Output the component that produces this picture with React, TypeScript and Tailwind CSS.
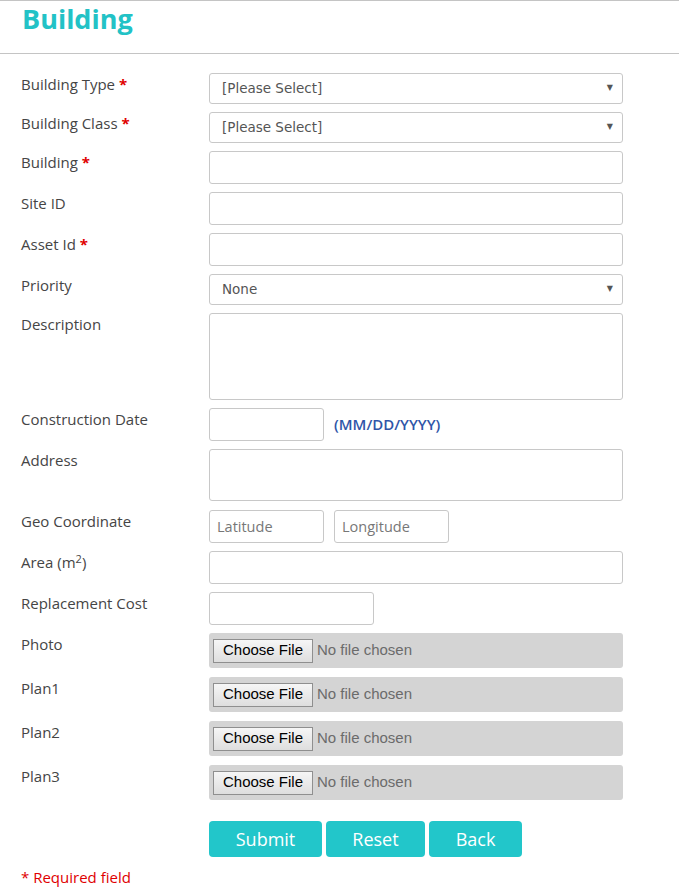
import React from "react";

const font = { fontFamily: '"Open Sans", Arial, sans-serif' };

function Req() {
  return <span className="ml-1 font-bold text-[#e00000]">*</span>;
}

function Row({ label, children, gap = "mb-2" }: { label: React.ReactNode; children: React.ReactNode; gap?: string }) {
  return (
    <div className={`flex ${gap}`}>
      <div className="w-[209px] shrink-0 pl-[21px] text-[15px] leading-[22px] text-[#454545]">{label}</div>
      <div className="flex items-center">{children}</div>
    </div>
  );
}

function Select({ value }: { value: string }) {
  return (
    <div className="relative flex h-[31px] w-[414px] items-center rounded-[3px] border border-[#c8c8c8] bg-white pl-[12px] text-[#555]" style={{ fontFamily: '"DejaVu Sans", Tahoma, sans-serif', fontSize: "13.5px" }}>
      {value}
      <span className="absolute right-[9px] top-[8px] text-[8px] text-[#555]">▼</span>
    </div>
  );
}

function TextInput({ w = "w-[414px]", h = "h-[33px]", placeholder }: { w?: string; h?: string; placeholder?: string }) {
  return (
    <div className={`${w} ${h} flex items-center rounded-[3px] border border-[#c8c8c8] bg-white pl-[7px] text-[14.5px] text-[#777]`}>
      {placeholder}
    </div>
  );
}

function FileBox() {
  return (
    <div className="flex h-[35px] w-[414px] items-center rounded-[3px] bg-[#d4d4d4] pl-[4px]" style={{ fontFamily: '"Liberation Sans", Arial, sans-serif' }}>
      <div className="flex h-[24px] w-[100px] items-center justify-center border border-[#8f8f8f] bg-gradient-to-b from-[#f6f6f6] to-[#dedede] text-[15px] text-black">
        Choose File
      </div>
      <span className="ml-[4px] text-[15px] text-[#6b6b6b]">No file chosen</span>
    </div>
  );
}

export default function App() {
  return (
    <div className="min-h-[889px] w-[679px] bg-white" style={font}>
      <div className="h-[54px] border-y border-[#c4c4c4]">
        <h1 className="pl-[22px] pt-[1px] text-[27px] font-bold leading-[34px] text-[#22c2c6]">Building</h1>
      </div>

      <div className="pt-[19px]">
        <Row label={<>Building Type<Req /></>}>
          <Select value="[Please Select]" />
        </Row>
        <Row label={<>Building Class<Req /></>}>
          <Select value="[Please Select]" />
        </Row>
        <Row label={<>Building<Req /></>}>
          <TextInput />
        </Row>
        <Row label="Site ID">
          <TextInput />
        </Row>
        <Row label={<>Asset Id<Req /></>}>
          <TextInput />
        </Row>
        <Row label="Priority">
          <Select value="None" />
        </Row>
        <Row label="Description">
          <TextInput h="h-[87px]" />
        </Row>
        <Row label="Construction Date">
          <TextInput w="w-[115px]" />
          <span className="ml-[10px] text-[15px] font-semibold text-[#2f55a8]">(MM/DD/YYYY)</span>
        </Row>
        <Row label="Address" gap="mb-[9px]">
          <TextInput h="h-[52px]" />
        </Row>
        <Row label="Geo Coordinate">
          <div className="flex gap-[10px]">
            <TextInput w="w-[115px]" placeholder="Latitude" />
            <TextInput w="w-[115px]" placeholder="Longitude" />
          </div>
        </Row>
        <Row label={<>Area (m<sup className="text-[11px]">2</sup>)</>}>
          <TextInput />
        </Row>
        <Row label="Replacement Cost">
          <TextInput w="w-[165px]" />
        </Row>
        <Row label="Photo" gap="mb-[9px]">
          <FileBox />
        </Row>
        <Row label="Plan1" gap="mb-[9px]">
          <FileBox />
        </Row>
        <Row label="Plan2" gap="mb-[9px]">
          <FileBox />
        </Row>
        <Row label="Plan3" gap="mb-[21px]">
          <FileBox />
        </Row>

        <div className="flex gap-[4px] pl-[209px]">
          <button className="h-[36px] w-[113px] rounded-[4px] bg-[#22c6ca] text-[18px] text-white">Submit</button>
          <button className="h-[36px] w-[99px] rounded-[4px] bg-[#22c6ca] text-[18px] text-white">Reset</button>
          <button className="h-[36px] w-[93px] rounded-[4px] bg-[#22c6ca] text-[18px] text-white">Back</button>
        </div>

        <div className="mt-[9px] pl-[21px] text-[15px] text-[#e00000]">* Required field</div>
      </div>
    </div>
  );
}
